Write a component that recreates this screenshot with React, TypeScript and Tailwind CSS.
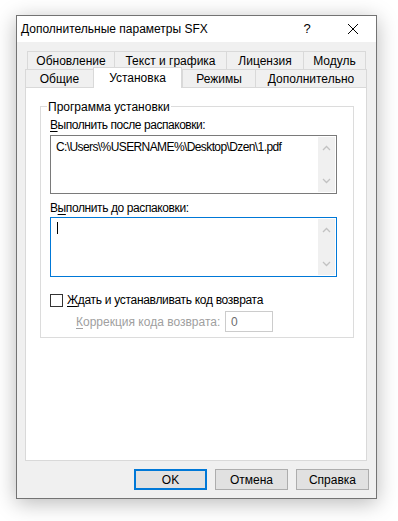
import React from "react";

const F = { fontFamily: '"Liberation Sans", Arial, sans-serif' };

function ScrollBar() {
  return (
    <div className="flex w-[17px] flex-col justify-between bg-[#f0f0f0] py-[6px]">
      <svg width="17" height="10" viewBox="0 0 17 10">
        <path d="M5 7 L8.5 3.5 L12 7" fill="none" stroke="#c2c2c2" strokeWidth="1.3" />
      </svg>
      <svg width="17" height="10" viewBox="0 0 17 10">
        <path d="M5 3 L8.5 6.5 L12 3" fill="none" stroke="#c2c2c2" strokeWidth="1.3" />
      </svg>
    </div>
  );
}

function Tab({ w, label, selected }: { w: number; label: string; selected?: boolean }) {
  return (
    <div
      style={{ width: w }}
      className={
        selected
          ? "relative z-10 -mt-[2px] -mb-px flex h-[21px] items-center justify-center border border-b-0 border-[#d9d9d9] bg-white"
          : "flex h-[18px] items-center justify-center border-l border-t border-[#d9d9d9] bg-[#f0f0f0] last:border-r"
      }
    >
      <span className="text-[12px] leading-none text-black">{label}</span>
    </div>
  );
}

export default function App() {
  return (
    <div className="min-h-[521px] bg-white pl-[16px] pt-[15px]" style={F}>
      <div className="flex h-[484px] w-[361px] flex-col border border-[#737373] bg-[#f0f0f0] shadow-[0_4px_20px_rgba(0,0,0,0.28)]">
        {/* title bar */}
        <div className="flex h-[26px] items-center bg-white pl-[4px]">
          <span className="flex-1 text-[12px] text-black">Дополнительные параметры SFX</span>
          <span className="w-[46px] text-center text-[13px] text-black">?</span>
          <div className="flex w-[46px] items-center justify-center">
            <svg width="12" height="12" viewBox="0 0 12 12">
              <path d="M1 1 L11 11 M11 1 L1 11" stroke="#000" strokeWidth="1" />
            </svg>
          </div>
        </div>

        {/* body */}
        <div className="flex flex-1 flex-col pl-[8px] pr-[9px] pt-[9px]">
          {/* tabs */}
          <div className="flex flex-col">
            <div className="flex pl-[2px]">
              <Tab w={87} label="Обновление" />
              <Tab w={112} label="Текст и графика" />
              <Tab w={77} label="Лицензия" />
              <Tab w={63} label="Модуль" />
            </div>
            <div className="flex items-end">
              <Tab w={68} label="Общие" />
              <Tab w={89} label="Установка" selected />
              <Tab w={73} label="Режимы" />
              <Tab w={112} label="Дополнительно" />
            </div>
          </div>

          {/* panel */}
          <div className="h-[374px] border border-[#d9d9d9] bg-white pl-[14px] pt-[18px]">
            <div className="relative h-[232px] w-[314px] border border-[#dcdcdc] pl-[9px] pt-[10px]">
              <span className="absolute -top-[9px] left-[6px] bg-white px-[1px] text-[12px] text-black">
                Программа установки
              </span>
              <div className="h-[16px] text-[12px] leading-[16px] tracking-[-0.45px] text-black">
                <span className="underline underline-offset-2">В</span>ыполнить после распаковки:
              </div>
              <div className="mt-[2px] flex h-[59px] w-[287px] border border-[#7a7a7a] bg-white p-px">
                <div className="flex-1 pl-[4px] pt-[2px] text-[12px] leading-[16px] tracking-[-0.6px] text-black">
                  C:\Users\%USERNAME%\Desktop\Dzen\1.pdf
                </div>
                <ScrollBar />
              </div>
              <div className="mt-[6px] h-[16px] text-[12px] leading-[16px] tracking-[-0.4px] text-black">
                В<span className="underline underline-offset-2">ы</span>полнить до распаковки:
              </div>
              <div className="mt-px flex h-[60px] w-[287px] border border-[#0078d7] bg-white p-px">
                <div className="flex-1 pl-[5px] pt-[3px]">
                  <div className="h-[12px] w-px bg-black" />
                </div>
                <ScrollBar />
              </div>
              <div className="mt-[15px] flex items-center">
                <div className="h-[13px] w-[13px] border border-[#333] bg-white" />
                <span className="ml-[4px] text-[12px] leading-[16px] tracking-[-0.3px] text-black">
                  <span className="underline underline-offset-2">Ж</span>дать и устанавливать код возврата
                </span>
              </div>
              <div className="mt-[3px] flex items-center">
                <span className="ml-[26px] w-[148px] text-[12px] leading-[16px] text-[#a0a0a0]">
                  <span className="underline underline-offset-2">К</span>оррекция кода возврата:
                </span>
                <div className="ml-px flex h-[21px] w-[48px] items-center border border-[#cccccc] bg-white pl-[5px] text-[12px] text-[#6d6d6d]">
                  0
                </div>
              </div>
            </div>
          </div>

          {/* buttons */}
          <div className="mt-[8px] flex justify-end gap-[8px]">
            <button className="h-[21px] w-[73px] border-2 border-[#0078d7] bg-[#e1e1e1] text-[12px] text-black">
              OK
            </button>
            <button className="h-[21px] w-[73px] border border-[#adadad] bg-[#e1e1e1] text-[12px] text-black">
              Отмена
            </button>
            <button className="mr-[-2px] h-[21px] w-[73px] border border-[#adadad] bg-[#e1e1e1] text-[12px] text-black">
              Справка
            </button>
          </div>
        </div>
      </div>
    </div>
  );
}
